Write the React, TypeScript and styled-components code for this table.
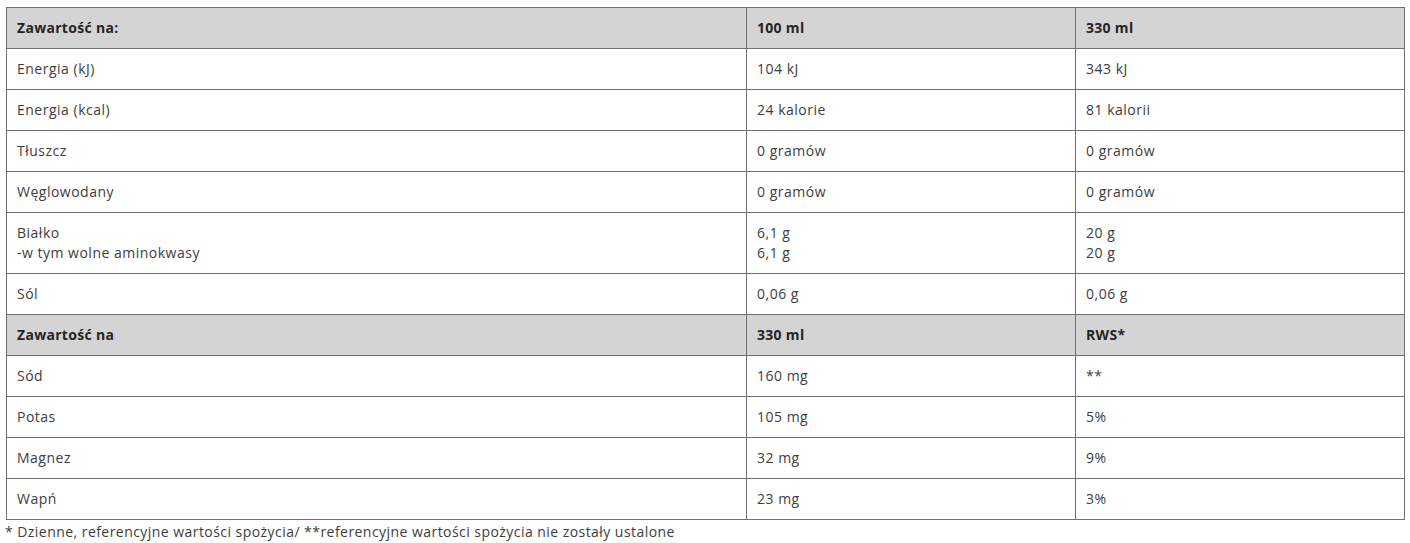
import React from "react";
import styled, {createGlobalStyle} from "styled-components";

const GlobalStyle = createGlobalStyle`
    html, body {
        margin: 0;
        padding: 0;
        background: #fff;
    }
    body {
        font-family: "Open Sans", "Liberation Sans", sans-serif;
        color: #3d3d3d;
    }
`

const Wrapper = styled.div`
    padding: 7px 6px 0 6px;
`

const Table = styled.table`
    width: 1398px;
    border-collapse: collapse;
    table-layout: fixed;
    font-size: 14px;
    line-height: 20px;
    letter-spacing: 0.5px;
`

const Col = styled.col<{ $w: number }>`
    width: ${p => p.$w}px;
`

const Cell = styled.td<{ $head?: boolean }>`
    border: 1px solid #6f6f6f;
    padding: 10px 10px;
    vertical-align: top;
    text-align: left;
    background: ${p => p.$head ? '#d4d4d4' : '#fff'};
    font-weight: ${p => p.$head ? 700 : 400};
    color: ${p => p.$head ? '#252525' : '#3d3d3d'};
    letter-spacing: ${p => p.$head ? '0.3px' : '0.5px'};
`

const Line = styled.div`
    white-space: nowrap;
`

const Note = styled.div`
    font-size: 14px;
    line-height: 18px;
    letter-spacing: 0.45px;
    color: #3d3d3d;
    padding: 3px 0 0 0;
    margin-left: -1px;
`

type Row = { cells: string[]; head?: boolean };

const rows: Row[] = [
    {cells: ['Zawartość na:', '100 ml', '330 ml'], head: true},
    {cells: ['Energia (kJ)', '104 kJ', '343 kJ']},
    {cells: ['Energia (kcal)', '24 kalorie', '81 kalorii']},
    {cells: ['Tłuszcz', '0 gramów', '0 gramów']},
    {cells: ['Węglowodany', '0 gramów', '0 gramów']},
    {cells: ['Białko\n-w tym wolne aminokwasy', '6,1 g\n6,1 g', '20 g\n20 g']},
    {cells: ['Sól', '0,06 g', '0,06 g']},
    {cells: ['Zawartość na', '330 ml', 'RWS*'], head: true},
    {cells: ['Sód', '160 mg', '**']},
    {cells: ['Potas', '105 mg', '5%']},
    {cells: ['Magnez', '32 mg', '9%']},
    {cells: ['Wapń', '23 mg', '3%']},
];

const Lines = ({text}: { text: string }) => <>
    {text.split('\n').map((l, i) => <Line key={i}>{l}</Line>)}
</>

const App = () => {
    return <Wrapper>
        <GlobalStyle/>
        <Table>
            <colgroup>
                <Col $w={740}/>
                <Col $w={329}/>
                <Col $w={329}/>
            </colgroup>
            <tbody>
            {rows.map((r, i) => <tr key={i}>
                {r.cells.map((c, j) => <Cell key={j} $head={r.head}><Lines text={c}/></Cell>)}
            </tr>)}
            </tbody>
        </Table>
        <Note>* Dzienne, referencyjne wartości spożycia/ **referencyjne wartości spożycia nie zostały ustalone</Note>
    </Wrapper>
}

export default App;
